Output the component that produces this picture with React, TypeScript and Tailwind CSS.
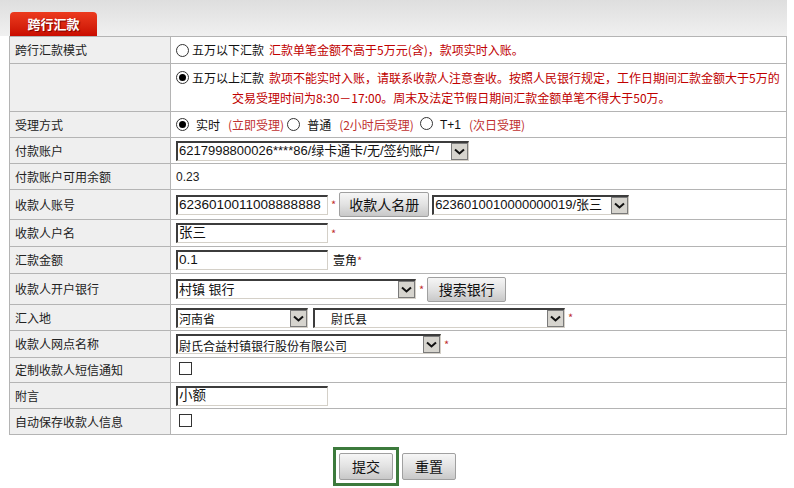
import React from "react";

const font = "font-['SimSun','Noto_Sans_CJK_SC',sans-serif]";

function Radio({ checked }: { checked?: boolean }) {
  return (
    <span className="inline-flex h-[13px] w-[13px] shrink-0 items-center justify-center rounded-full border border-[#333] bg-white">
      {checked && <span className="h-[7px] w-[7px] rounded-full bg-black" />}
    </span>
  );
}

function Checkbox() {
  return <span className="inline-block h-[13px] w-[13px] border border-[#333] bg-white" />;
}

function Chevron() {
  return (
    <svg width="11" height="7" viewBox="0 0 11 7">
      <path d="M1 1.5 L5.5 5.5 L10 1.5" fill="none" stroke="#111" strokeWidth="2" />
    </svg>
  );
}

function Select({
  width,
  text,
  small,
  indent,
}: {
  width: string;
  text: string;
  small?: boolean;
  indent?: boolean;
}) {
  return (
    <div
      className={`flex h-[20px] ${width} items-stretch border-t-2 border-l-2 border-t-[#3c3c3c] border-l-[#3c3c3c] border-b border-r border-b-[#d4d0c8] border-r-[#d4d0c8] bg-white`}
    >
      <span
        className={`flex flex-1 items-center overflow-hidden whitespace-nowrap ${indent ? "pl-[16px]" : "pl-[1px]"} ${
          small
            ? "text-[12px] font-['Noto_Sans_CJK_SC',sans-serif] pt-[2px]"
            : "text-[13px] font-['Liberation_Sans','Noto_Sans_CJK_SC',sans-serif]"
        } text-[#111]`}
      >
        {text}
      </span>
      <span className="flex w-[17px] shrink-0 items-center justify-center border border-[#7a7a7a] bg-[#d6d4ce]">
        <Chevron />
      </span>
    </div>
  );
}

function TextInput({ value }: { value: string }) {
  return (
    <div className="flex h-[20px] w-[152px] items-center border-t-2 border-l-2 border-t-[#3c3c3c] border-l-[#3c3c3c] border-b border-r border-b-[#d4d0c8] border-r-[#d4d0c8] bg-white pl-[1px] text-[13.5px] font-['Liberation_Sans','Noto_Sans_CJK_SC',sans-serif] text-[#111] whitespace-nowrap overflow-hidden">
      {value}
    </div>
  );
}

function Btn({ label, w, h = "h-[25px]" }: { label: string; w: string; h?: string }) {
  return (
    <span
      className={`inline-flex ${w} ${h} items-center justify-center border border-[#a0a0a0] bg-gradient-to-b from-[#f6f6f6] via-[#e2e2e2] to-[#c8c8c8] text-[14px] text-[#111] font-['Noto_Sans_CJK_SC',sans-serif] rounded-[2px]`}
    >
      {label}
    </span>
  );
}

const Star = () => <span className="text-[11px] text-[#c03030] leading-none">*</span>;

function Row({
  label,
  h,
  children,
  last,
}: {
  label: string;
  h: string;
  children?: React.ReactNode;
  last?: boolean;
}) {
  return (
    <div className={`grid grid-cols-[161px_1fr] ${h} ${last ? "" : "border-b border-[#b4b4b4]"}`}>
      <div className="flex items-center border-r border-[#b4b4b4] bg-[#efefef] pl-[5px] text-[12px] text-[#222]">
        {label}
      </div>
      <div className="flex items-center gap-[3px] pl-[5px]">{children}</div>
    </div>
  );
}

export default function App() {
  return (
    <div className={`relative h-[488px] w-[794px] bg-white ${font} text-[12px]`}>
      <div className="h-[36px] w-[787px] bg-gradient-to-b from-[#dedede] to-[#f0f0f0] pt-[12px] pl-[10px]">
        <div className="flex h-[24px] w-[87px] items-center justify-center rounded-t-[4px] bg-gradient-to-b from-[#ec3a1e] to-[#c90a00] text-[13px] font-bold text-white [text-shadow:1px_1px_1px_#700]">
          跨行汇款
        </div>
      </div>

      <div className="ml-[9px] w-[778px] border border-[#b4b4b4]">
        <Row label="跨行汇款模式" h="h-[27px]">
          <Radio />
          <span className="text-[#111]">五万以下汇款</span>
          <span className="ml-[2px] text-[#c00000]">汇款单笔金额不高于5万元(含)，款项实时入账。</span>
        </Row>

        <div className="grid h-[48px] grid-cols-[161px_1fr] border-b border-[#b4b4b4]">
          <div className="border-r border-[#b4b4b4] bg-[#efefef]" />
          <div className="flex flex-col justify-center pl-[5px] leading-[20px]">
            <div className="flex items-center gap-[3px] whitespace-nowrap">
              <Radio checked />
              <span className="text-[#111]">五万以上汇款</span>
              <span className="ml-[2px] text-[#c00000]">
                款项不能实时入账，请联系收款人注意查收。按照人民银行规定，工作日期间汇款金额大于5万的
              </span>
            </div>
            <div className="pl-[56px] text-[#c00000] whitespace-nowrap">
              交易受理时间为8:30－17:00。周末及法定节假日期间汇款金额单笔不得大于50万。
            </div>
          </div>
        </div>

        <Row label="受理方式" h="h-[26px]">
          <Radio checked />
          <span className="ml-[4px] text-[#111]">实时</span>
          <span className="ml-[5px] text-[#c03030]">(立即受理)</span>
          <Radio />
          <span className="ml-[4px] text-[#111]">普通</span>
          <span className="ml-[5px] text-[#c03030]">(2小时后受理)</span>
          <span className="ml-[3px]">
            <Radio />
          </span>
          <span className="ml-[4px] text-[#111] font-['Liberation_Sans',sans-serif]">T+1</span>
          <span className="ml-[5px] text-[#c03030]">(次日受理)</span>
        </Row>

        <Row label="付款账户" h="h-[26px]">
          <Select width="w-[293px]" text="6217998800026****86/绿卡通卡/无/签约账户/" />
        </Row>

        <Row label="付款账户可用余额" h="h-[26px]">
          <span className="font-['Liberation_Sans',sans-serif] text-[12px] text-[#222]">0.23</span>
        </Row>

        <Row label="收款人账号" h="h-[30px]">
          <TextInput value="6236010011008888888" />
          <Star />
          <span>
            <Btn label="收款人名册" w="w-[90px]" />
          </span>
          <Select width="w-[197px]" text="6236010010000000019/张三" />
        </Row>

        <Row label="收款人户名" h="h-[27px]">
          <TextInput value="张三" />
          <Star />
        </Row>

        <Row label="汇款金额" h="h-[27px]">
          <TextInput value="0.1" />
          <span className="ml-[2px] text-[#111]">
            壹角
            <Star />
          </span>
        </Row>

        <Row label="收款人开户银行" h="h-[31px]">
          <Select width="w-[240px]" text="村镇 银行" />
          <Star />
          <Btn label="搜索银行" w="w-[79px]" />
        </Row>

        <Row label="汇入地" h="h-[26px]">
          <Select width="w-[132px]" text="河南省" small />
          <span className="ml-[2px]">
            <Select width="w-[252px]" text="尉氏县" small indent />
          </span>
          <Star />
        </Row>

        <Row label="收款人网点名称" h="h-[27px]">
          <Select width="w-[265px]" text="尉氏合益村镇银行股份有限公司" small />
          <Star />
        </Row>

        <Row label="定制收款人短信通知" h="h-[25px]">
          <span className="ml-[3px]">
            <Checkbox />
          </span>
        </Row>

        <Row label="附言" h="h-[26px]">
          <TextInput value="小额" />
        </Row>

        <Row label="自动保存收款人信息" h="h-[25px]" last>
          <span className="ml-[3px]">
            <Checkbox />
          </span>
        </Row>
      </div>

      <div className="mt-[12px] flex items-center gap-[3px] pl-[333px]">
        <span className="inline-flex border-[3px] border-[#3c7a3c] p-[3px]">
          <Btn label="提交" w="w-[54px]" h="h-[27px]" />
        </span>
        <Btn label="重置" w="w-[54px]" h="h-[27px]" />
      </div>
    </div>
  );
}
